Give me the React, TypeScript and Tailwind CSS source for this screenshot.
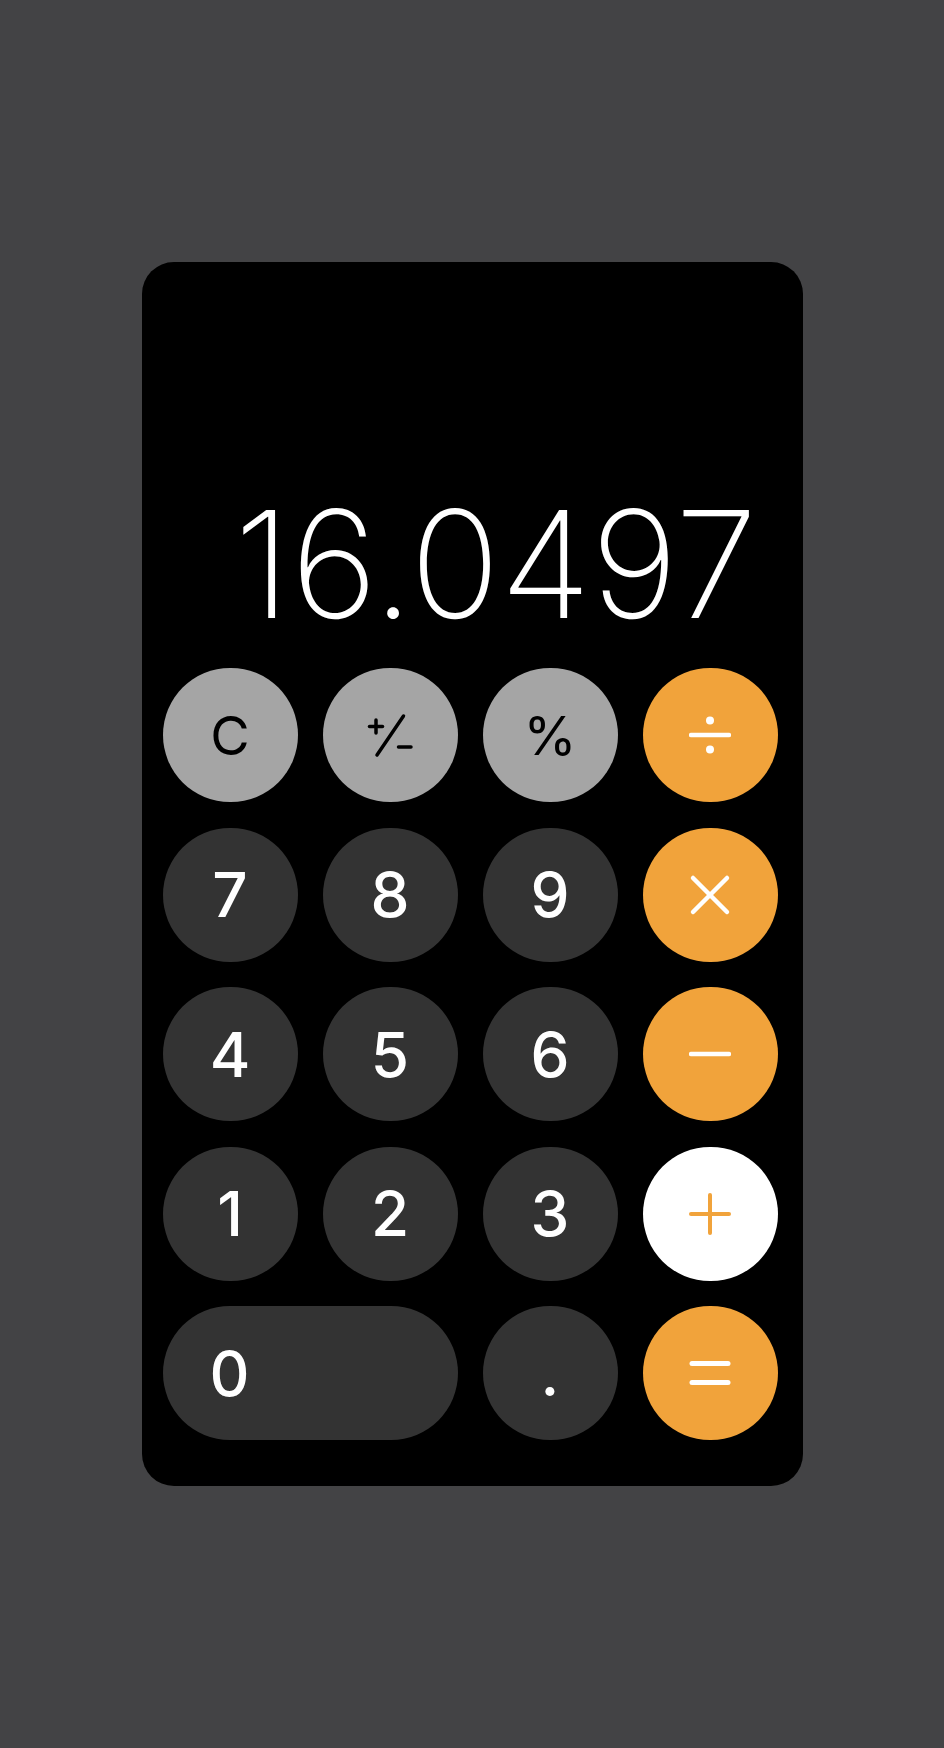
import React from "react";

type Kind = "div" | "mul" | "sub" | "add" | "eq" | "pm";

const OpIcon: React.FC<{ kind: Kind; color: string }> = ({ kind, color }) => {
  if (kind === "pm") {
    return (
      <svg width="48" height="48" viewBox="0 0 48 48" fill="none" stroke={color} strokeLinecap="round" strokeWidth="3.5">
        <line x1="3.5" y1="15.5" x2="16.5" y2="15.5" />
        <line x1="10" y1="9" x2="10" y2="22" />
        <line x1="11" y1="44" x2="37.5" y2="5" />
        <line x1="32.5" y1="36" x2="45" y2="36" />
      </svg>
    );
  }
  return (
    <svg width="42" height="42" viewBox="0 0 42 42" fill="none" stroke={color} strokeLinecap="round">
      {kind === "div" && (
        <>
          <line x1="2" y1="21" x2="40" y2="21" strokeWidth="4.5" />
          <circle cx="21" cy="6.5" r="4" fill={color} stroke="none" />
          <circle cx="21" cy="35.5" r="4" fill={color} stroke="none" />
        </>
      )}
      {kind === "mul" && (
        <>
          <line x1="4" y1="4" x2="38" y2="38" strokeWidth="4.5" />
          <line x1="38" y1="4" x2="4" y2="38" strokeWidth="4.5" />
        </>
      )}
      {kind === "sub" && <line x1="2" y1="21" x2="40" y2="21" strokeWidth="4.5" />}
      {kind === "add" && (
        <>
          <line x1="2" y1="21" x2="40" y2="21" strokeWidth="4" />
          <line x1="21" y1="2" x2="21" y2="40" strokeWidth="4" />
        </>
      )}
      {kind === "eq" && (
        <>
          <line x1="3" y1="11.5" x2="39" y2="11.5" strokeWidth="5" />
          <line x1="3" y1="30.5" x2="39" y2="30.5" strokeWidth="5" />
        </>
      )}
    </svg>
  );
};

const Key: React.FC<{ className?: string; children: React.ReactNode; label?: string }> = ({
  className = "",
  children,
  label,
}) => (
  <button
    aria-label={label}
    className={`h-[134px] rounded-full flex items-center justify-center ${className}`}
  >
    {children}
  </button>
);

const App: React.FC = () => {
  const dark = "bg-[#333333] text-white text-[62px] font-medium";
  const light = "bg-[#a5a5a5] text-black text-[54px]";
  const orange = "bg-[#f1a33b]";

  return (
    <div className="min-h-screen w-full bg-[#434345] flex items-center justify-center">
      <div className="w-[661px] h-[1224px] rounded-[32px] bg-black flex flex-col justify-end pl-[21px] pr-[25px] pb-[46px] font-['Inter','Noto_Sans',sans-serif]">
        {/* Display */}
        <div className="text-right text-white text-[149px] font-extralight leading-none pr-[20px] mb-[29px]">
          16.0497
        </div>

        {/* Keypad */}
        <div className="grid grid-cols-4 gap-x-[25px] gap-y-[25.5px]">
          <Key className={light}>C</Key>
          <Key className="bg-[#a5a5a5]" label="+/-">
            <OpIcon kind="pm" color="#000000" />
          </Key>
          <Key className={light}>%</Key>
          <Key className={orange} label="divide">
            <OpIcon kind="div" color="#ffffff" />
          </Key>

          <Key className={dark}>7</Key>
          <Key className={dark}>8</Key>
          <Key className={dark}>9</Key>
          <Key className={orange} label="multiply">
            <OpIcon kind="mul" color="#ffffff" />
          </Key>

          <Key className={dark}>4</Key>
          <Key className={dark}>5</Key>
          <Key className={dark}>6</Key>
          <Key className={orange} label="subtract">
            <OpIcon kind="sub" color="#ffffff" />
          </Key>

          <Key className={dark}>1</Key>
          <Key className={dark}>2</Key>
          <Key className={dark}>3</Key>
          <Key className="bg-white" label="add">
            <OpIcon kind="add" color="#f1a33b" />
          </Key>

          <Key className={`${dark} col-span-2 !justify-start`}>
            <span className="w-[134px] text-center">0</span>
          </Key>
          <Key className={dark}>.</Key>
          <Key className={orange} label="equals">
            <OpIcon kind="eq" color="#ffffff" />
          </Key>
        </div>
      </div>
    </div>
  );
};

export default App;
